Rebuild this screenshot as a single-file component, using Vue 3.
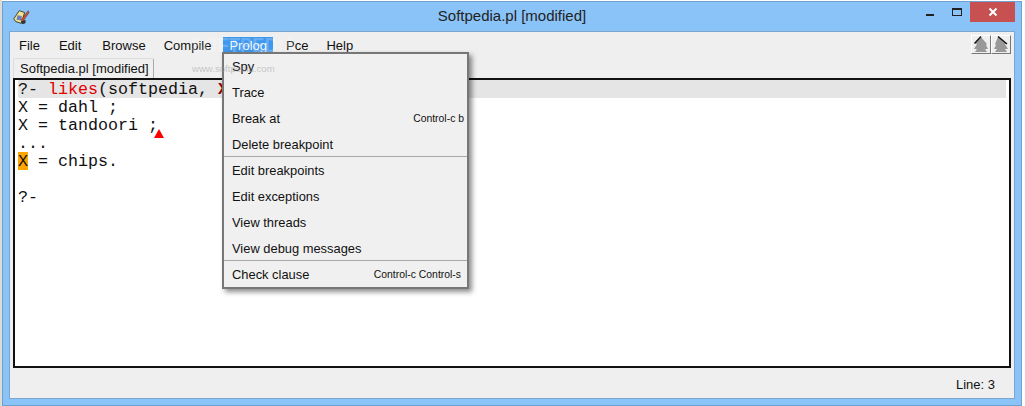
<script setup>
const menus = ['File', 'Edit', 'Browse', 'Compile', 'Prolog', 'Pce', 'Help']
const groups = [
  [['Spy', ''], ['Trace', ''], ['Break at', 'Control-c b'], ['Delete breakpoint', '']],
  [['Edit breakpoints', ''], ['Edit exceptions', ''], ['View threads', ''], ['View debug messages', '']],
  [['Check clause', 'Control-c Control-s']],
]
</script>

<template>
  <div class="page">
    <div class="window">
      <header class="titlebar">
        <svg class="appicon" viewBox="0 0 20 20" width="18" height="18">
          <path d="M2 12 L8 3 L14 5 L12 12 L10 17 L4 15 Z" fill="#f2e58c" stroke="#333" stroke-width="1" />
          <path d="M6 8 L11 9 L10 14 L5 13 Z" fill="#6f7fb8" />
          <path d="M10 13 L18 3 L19 5 L12 15 Z" fill="#c8502a" stroke="#522" stroke-width=".5" />
          <path d="M10 15 L15 13 L15 17 L11 18 Z" fill="#333" />
        </svg>
        <div class="title">Softpedia.pl [modified]</div>
        <div class="controls">
          <div class="ctl"><span class="min"></span></div>
          <div class="ctl"><span class="max"></span></div>
          <div class="close">
            <svg viewBox="0 0 10 10" width="10" height="10"><path d="M1.5 1.5 L8.5 8.5 M8.5 1.5 L1.500 8.5" stroke="#fff" stroke-width="2" /></svg>
          </div>
        </div>
      </header>
      <main class="client">
        <div class="menubar">
          <nav class="menus">
            <span v-for="m in menus" :key="m" class="menu" :class="{ active: m === 'Prolog' }">{{ m }}</span>
          </nav>
          <div class="arrows">
            <button class="arrow"><svg viewBox="0 0 18 17" width="18" height="17"><path d="M9 1 L3 8 L5 8 L2 13 L5 13 L3 16 L15 16 L13 13 L16 13 L14 9 L15 8 Z" fill="#999" /><path d="M2.500 7.500 L9 0.500" stroke="#111" stroke-width="1.400" fill="none" /></svg></button>
            <button class="arrow"><svg viewBox="0 0 18 17" width="18" height="17"><path d="M6 1 L15 8 L13 8 L16 13 L13 13 L15 16 L3 16 L5 13 L2 13 L4 9 L3 8 Z" fill="#999" /><path d="M6 0.500 L15 8" stroke="#111" stroke-width="1.400" fill="none" /></svg></button>
          </div>
        </div>
        <div class="tabs"><div class="tab">Softpedia.pl [modified]</div></div>
        <div class="editor">
          <div class="line current">?- <span class="red">likes</span>(softpedia, <b class="dark">X</b>).</div>
          <div class="line">X = dahl ;</div>
          <div class="line">X = tandoori ;<span class="caret"></span></div>
          <div class="line">...</div>
          <div class="line"><span class="mark">X</span> = chips.</div>
          <div class="line">&nbsp;</div>
          <div class="line">?-</div>
        </div>
        <footer class="status">Line: 3</footer>
      </main>

      <div class="popup">
        <section v-for="(g, i) in groups" :key="i" class="group">
          <div v-for="it in g" :key="it[0]" class="item">
            <span>{{ it[0] }}</span>
            <span class="key">{{ it[1] }}</span>
          </div>
        </section>
      </div>

      <div class="watermark">
        <span class="wm-big">SOFTPEDIA</span>
        <span class="wm-small">www.softpedia.com</span>
      </div>
    </div>
  </div>
</template>

<style>
html, body { margin: 0; background: #fff; }
</style>

<style scoped>
.page {
  width: 1025px;
  height: 406px;
  padding: 1px 3px 0 2px;
  box-sizing: border-box;
  background: linear-gradient(90deg, #dcdcd6 0, #dcdcd6 2px, #fff 2px);
  overflow: hidden;
  font-family: "Liberation Sans", Arial, sans-serif;
  color: #111;
}
.window {
  position: relative;
  height: 405px;
  box-sizing: border-box;
  background: #8ac3f8;
  border: 1px solid #6fa0cf;
  display: flex;
  flex-direction: column;
  padding: 0 6px 6px 6px;
}
.titlebar {
  height: 29px;
  flex: none;
  display: flex;
  align-items: center;
  position: relative;
}
.appicon { margin: 0 0 0 3px; }
.title {
  position: absolute;
  left: 0;
  right: 0;
  top: 4px;
  text-align: center;
  font-size: 15px;
  line-height: 20px;
  color: #222;
}
.controls {
  margin-left: auto;
  display: flex;
  align-self: flex-start;
  position: relative;
}
.ctl {
  width: 27px;
  height: 20px;
  display: flex;
  align-items: center;
  justify-content: center;
}
.min { width: 8px; height: 2px; margin-top: 6px; background: #222; }
.max { width: 8px; height: 5px; border: 1px solid #222; border-top-width: 2px; }
.close {
  width: 45px;
  height: 20px;
  background: #c75050;
  display: flex;
  align-items: center;
  justify-content: center;
}
.client {
  flex: 1;
  background: #efefef;
  border: 1px solid #7aa6d0;
  display: flex;
  flex-direction: column;
  padding: 0 3px;
  min-height: 0;
}
.menubar {
  height: 26px;
  flex: none;
  display: flex;
  align-items: flex-start;
  justify-content: space-between;
}
.menus { display: flex; padding-top: 5px; }
.menu {
  font-size: 13px;
  line-height: 17px;
  padding: 0 6px;
  margin-right: 6px;
}
.menu:nth-child(1) { margin-right: 7px; }
.menu:nth-child(2) { margin-right: 9px; }
.menu:nth-child(5) { margin-right: 7px; }
.menu.active {
  background: #3f97ee;
  color: #eef6fd;
}
.arrows { display: flex; margin-top: 3px; }
.arrow {
  width: 20px;
  height: 19px;
  padding: 0;
  background: #efefef;
  border: 1px solid;
  border-color: #fff #777 #777 #fff;
  display: flex;
  align-items: center;
  justify-content: center;
}
.tabs { height: 20px; flex: none; display: flex; }
.tab {
  width: 141px;
  box-sizing: border-box;
  border: 1px solid #aaa;
  border-bottom: 0;
  border-radius: 2px 2px 0 0;
  border-left-color: #ddd;
  border-top-color: #ddd;
  font-size: 13px;
  line-height: 20px;
  padding-left: 6px;
  white-space: nowrap;
}
.editor {
  height: 290px;
  flex: none;
  box-sizing: border-box;
  background: #fff;
  border: 2px solid #111;
  padding: 0 3px;
  font-family: "Liberation Mono", "Courier New", monospace;
  font-size: 16.67px;
  line-height: 20px;
  color: #111;
}
.line { height: 18px; white-space: pre; position: relative; }
.current { background: #e5e5e5; }
.red { color: #e00000; }
.dark { color: #900; }
.mark { background: #ffa500; display: inline-block; height: 18px; line-height: 20px; vertical-align: top; }
.caret {
  display: inline-block;
  width: 0;
  height: 0;
  border: 5px solid transparent;
  border-top: 0;
  border-bottom: 9px solid #f00;
  margin: 0 0 -8px -4px;
  vertical-align: baseline;
}
.status {
  flex: 1;
  display: flex;
  align-items: center;
  justify-content: flex-end;
  font-size: 13px;
  padding: 3px 16px 0 0;
}
.watermark {
  position: absolute;
  left: 188px;
  top: 31px;
  display: flex;
  flex-direction: column;
  align-items: flex-start;
  pointer-events: none;
}
.wm-big {
  font-size: 21px;
  font-weight: bold;
  line-height: 24px;
  color: rgba(255, 255, 255, .22);
  transform: scaleX(.875);
  transform-origin: left center;
}
.wm-small {
  font-size: 9.6px;
  line-height: 14px;
  margin: 5px 0 0 1px;
  color: rgba(150, 150, 150, .5);
}
.popup {
  position: absolute;
  left: 219px;
  top: 50px;
  width: 247px;
  box-sizing: border-box;
  background: #f0f0f0;
  border: 2px solid #777;
  box-shadow: 3px 3px 5px rgba(0, 0, 0, .45);
}
.group + .group { border-top: 1px solid #a8a8a8; margin-top: -2px; padding-top: 1px; }
.item {
  height: 26px;
  box-sizing: border-box;
  display: flex;
  align-items: center;
  justify-content: space-between;
  padding: 0 3px 2px 8px;
  font-size: 12.9px;
  color: #111;
}
.group:last-child .item { height: 25px; padding: 0 6px 0 8px; }
.key { font-size: 10.4px; }
</style>
